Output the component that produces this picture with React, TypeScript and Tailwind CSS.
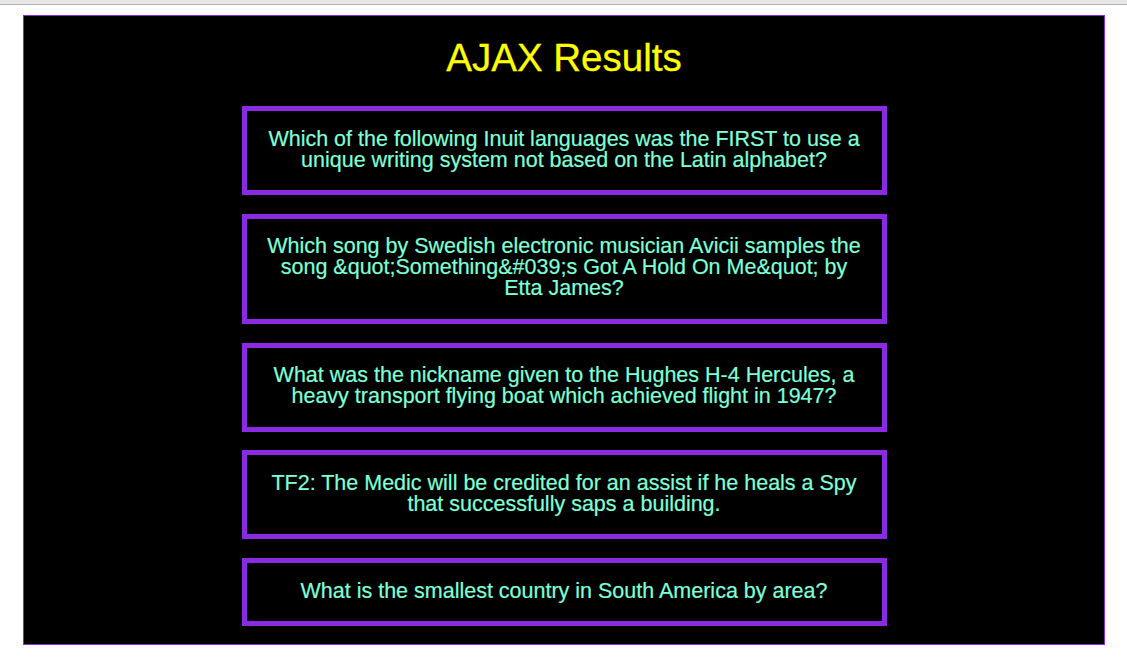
const questions = [
  'Which of the following Inuit languages was the FIRST to use a unique writing system not based on the Latin alphabet?',
  'Which song by Swedish electronic musician Avicii samples the song &quot;Something&#039;s Got A Hold On Me&quot; by Etta James?',
  'What was the nickname given to the Hughes H-4 Hercules, a heavy transport flying boat which achieved flight in 1947?',
  'TF2: The Medic will be credited for an assist if he heals a Spy that successfully saps a building.',
  'What is the smallest country in South America by area?',
];

export default function App() {
  return (
    <div className="min-h-[659px] bg-white font-['Liberation_Sans',Arial,sans-serif]">
      <div className="h-[5px] bg-[#e6e6e6] border-b border-[#b4b4b4]" />
      <div className="ml-[23px] mr-[22px] mt-[10px] border border-[#8a2be2] bg-black pt-[20px] pb-[18px]">
        <h1 className="text-center text-[38.5px] leading-[44px] text-[#ffff00] [-webkit-text-stroke:0.3px_#ffff00]">
          AJAX Results
        </h1>
        <div className="mt-[26px] flex flex-col items-center gap-[18.75px]">
          {questions.map((q) => (
            <div
              key={q}
              className="w-[645px] border-[5px] border-[#8a2be2] px-[18px] pt-[17.5px] pb-[19.5px] text-center text-[21.5px] leading-[21px] text-[#7fffd4] [-webkit-text-stroke:0.2px_#7fffd4]"
            >
              {q}
            </div>
          ))}
        </div>
      </div>
    </div>
  );
}
